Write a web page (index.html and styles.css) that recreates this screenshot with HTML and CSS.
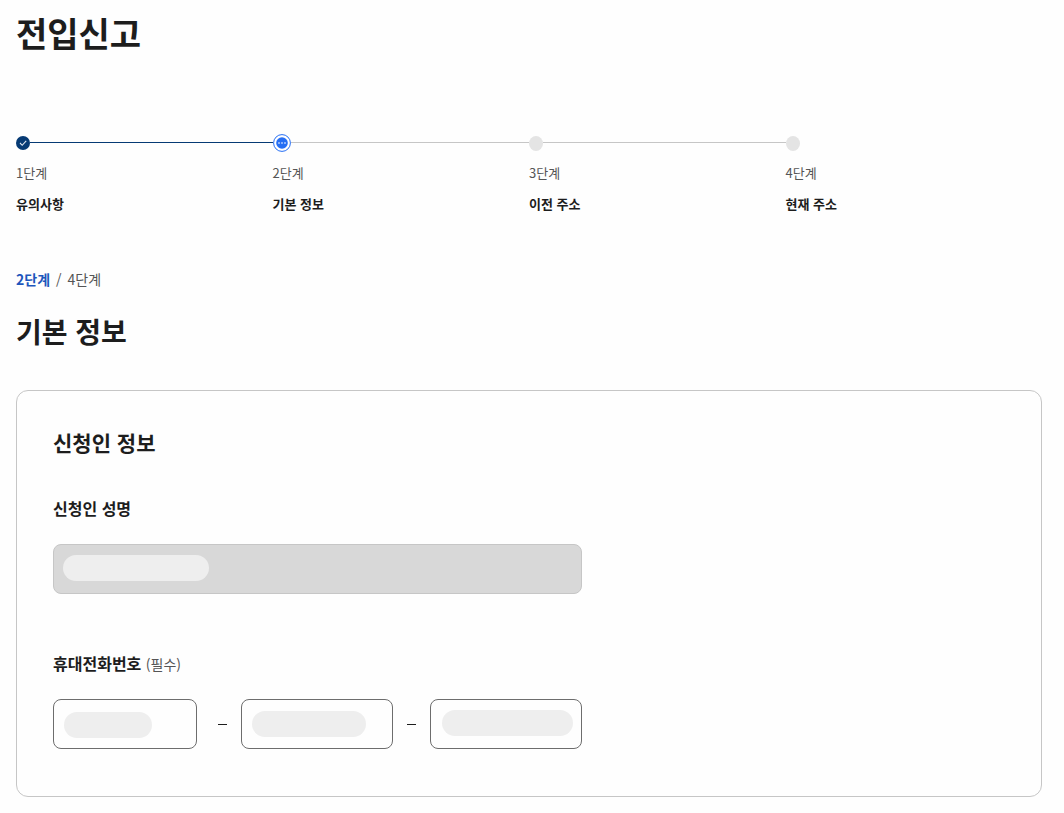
FILE: index.html
```html
<!DOCTYPE html>
<html lang="ko">
<head>
<meta charset="utf-8">
<meta name="viewport" content="width=device-width, initial-scale=1">
<title>전입신고</title>
<link rel="stylesheet" href="styles.css">
</head>
<body>
<main class="page">
  <h1 class="page-title">전입신고</h1>

  <ol class="steps">
    <li class="step step-done">
      <div class="step-track">
        <svg class="step-icon" width="14" height="18" viewBox="0 0 14 18" aria-hidden="true">
          <circle cx="7" cy="9" r="7" fill="#063a74"/>
          <path d="M4 9l2.200 2.300L10.200 6.800" fill="none" stroke="#dfe7f0" stroke-width="1.100"/>
        </svg>
      </div>
      <span class="step-no">1단계</span>
      <strong class="step-name">유의사항</strong>
    </li>
    <li class="step" aria-current="step">
      <div class="step-track">
        <svg class="step-icon" width="18" height="18" viewBox="0 0 18 18" aria-hidden="true">
          <circle cx="9" cy="9" r="8.400" fill="#fff" stroke="#256ef4"/>
          <circle cx="9" cy="9" r="5.800" fill="#256ef4"/>
          <path d="M5 9h2M8 9h2M11 9h2" stroke="#a9c6fb" stroke-width="1.400"/>
        </svg>
      </div>
      <span class="step-no">2단계</span>
      <strong class="step-name">기본 정보</strong>
    </li>
    <li class="step">
      <div class="step-track">
        <svg class="step-icon" width="14" height="18" viewBox="0 0 14 18" aria-hidden="true">
          <ellipse cx="7" cy="9.500" rx="7" ry="7.500" fill="#e4e4e4"/>
        </svg>
      </div>
      <span class="step-no">3단계</span>
      <strong class="step-name">이전 주소</strong>
    </li>
    <li class="step step-last">
      <div class="step-track">
        <svg class="step-icon" width="14" height="18" viewBox="0 0 14 18" aria-hidden="true">
          <ellipse cx="7" cy="9.500" rx="7" ry="7.500" fill="#e4e4e4"/>
        </svg>
      </div>
      <span class="step-no">4단계</span>
      <strong class="step-name">현재 주소</strong>
    </li>
  </ol>

  <p class="progress"><strong class="progress-now">2단계</strong><span>/</span><span>4단계</span></p>
  <h2 class="section-title">기본 정보</h2>

  <form class="card">
    <h3 class="card-title">신청인 정보</h3>

    <div class="field">
      <label class="label" for="name">신청인 성명</label>
      <div class="control">
        <input class="input" id="name" type="text" disabled>
        <span class="mask mask-name"></span>
      </div>
    </div>

    <fieldset class="field">
      <legend class="label">휴대전화번호 <span class="required">(필수)</span></legend>
      <div class="phone">
        <div class="control control-first">
          <input class="input" type="tel" aria-label="휴대전화번호 앞자리" required>
          <span class="mask mask-first"></span>
        </div>
        <span class="dash"></span>
        <div class="control">
          <input class="input" type="tel" aria-label="휴대전화번호 가운데 자리" required>
          <span class="mask mask-middle"></span>
        </div>
        <span class="dash"></span>
        <div class="control">
          <input class="input" type="tel" aria-label="휴대전화번호 뒷자리" required>
          <span class="mask mask-last"></span>
        </div>
      </div>
    </fieldset>
  </form>
</main>
</body>
</html>
```
FILE: styles.css
```css
* {
  box-sizing: border-box;
}

body {
  margin: 0;
  background: #fefefe;
  color: #1d1d1d;
  font-family: "Noto Sans CJK KR", sans-serif;
}

.page {
  padding: 7px 22px 16px 16px;
}

.page-title {
  margin: 0;
  font-size: 34px;
  line-height: 52px;
}

.steps {
  display: grid;
  grid-template-columns: repeat(4, 1fr);
  margin: 75px 0 0;
  padding: 0;
  list-style: none;
}

.step {
  display: flex;
  flex-direction: column;
  font-size: 13px;
  line-height: 20px;
}

.step-track {
  display: flex;
  align-items: flex-start;
  height: 18px;
}

.step-track::after {
  content: "";
  flex: 1;
  height: 1px;
  margin-top: 8px;
  background: #c6c6c6;
}

.step-done .step-track::after {
  background: #063a74;
}

.step-last .step-track::after {
  display: none;
}

.step-no {
  margin-top: 11px;
  color: #555;
}

.step-name {
  margin-top: 11px;
}

.progress {
  display: flex;
  gap: 6px;
  margin: 55px 0 0;
  color: #555;
  font-size: 14px;
  line-height: 20px;
}

.progress-now {
  color: #1d56bc;
}

.section-title {
  margin: 21px 0 0;
  font-size: 28px;
  line-height: 42px;
}

.card {
  margin-top: 38px;
  padding: 35px 36px 47px;
  border: 1px solid #c6c6c6;
  border-radius: 12px;
}

.card-title {
  margin: 0;
  font-size: 21px;
  line-height: 32px;
}

.field {
  max-width: 529px;
  min-width: 0;
  margin: 38px 0 0;
  padding: 0;
  border: 0;
}

.field + .field {
  margin-top: 57px;
}

.label {
  display: block;
  margin: 0;
  padding: 0 0 24px;
  font-size: 16px;
  font-weight: 700;
  line-height: 24px;
}

.field + .field .label {
  padding-bottom: 23px;
}

.required {
  color: #555;
  font-size: 14px;
  font-weight: 400;
}

.phone {
  display: flex;
  align-items: center;
  gap: 14px;
}

.control {
  position: relative;
  flex: 1;
}

.control-first {
  flex: 0 0 151px;
}

.input {
  display: block;
  width: 100%;
  height: 50px;
  padding: 0 12px;
  border: 1px solid #6d6d6d;
  border-radius: 8px;
  background: #fefefe;
  color: inherit;
  font: inherit;
}

.input:disabled {
  border-color: #c6c6c6;
  background: #d8d8d8;
}

.control-first .input {
  width: calc(100% - 7px);
}

.dash {
  width: 9px;
  height: 1px;
  background: #1d1d1d;
}

.mask {
  position: absolute;
  height: 26px;
  border-radius: 13px;
  background: #eee;
  pointer-events: none;
}

.mask-name {
  top: 11px;
  left: 10px;
  width: 146px;
}

.mask-first {
  top: 13px;
  left: 11px;
  width: 88px;
}

.mask-middle {
  top: 12px;
  left: 11px;
  width: 114px;
}

.mask-last {
  top: 11px;
  left: 12px;
  width: 131px;
}
```
